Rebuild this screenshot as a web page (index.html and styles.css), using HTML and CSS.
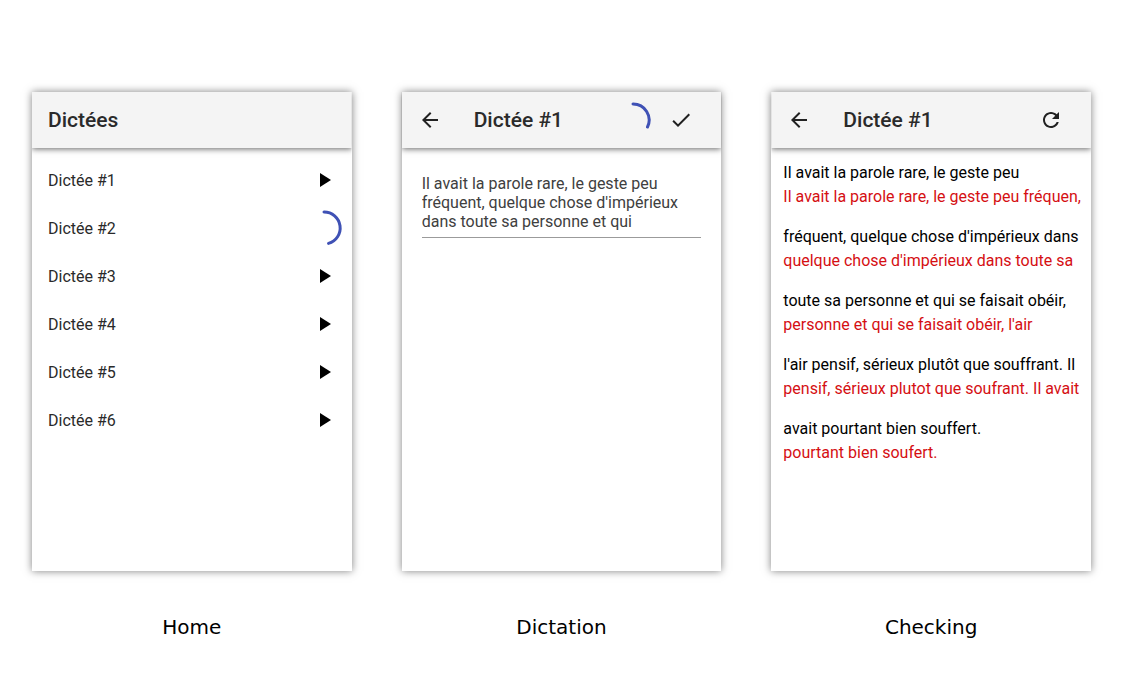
FILE: index.html
```html
<!DOCTYPE html>
<html lang="fr">
<head>
<meta charset="utf-8">
<meta name="viewport" content="width=device-width, initial-scale=1">
<title>Dictées</title>
<link rel="stylesheet" href="styles.css">
</head>
<body>
<main class="board">
  <figure class="screen">
    <section class="phone">
      <header class="bar"><h1 class="title">Dictées</h1></header>
      <ul class="list">
        <li class="row"><span class="label">Dictée #1</span><button class="icon-button" aria-label="Lire Dictée #1"><svg class="icon" viewBox="0 0 24 24"><path d="M8 5v14l11-7z"/></svg></button></li>
        <li class="row"><span class="label">Dictée #2</span><span class="loader"><svg class="spinner" viewBox="0 0 40 40"><path d="M20 4A16 16 0 0 1 24.500 35.400"/></svg></span></li>
        <li class="row"><span class="label">Dictée #3</span><button class="icon-button" aria-label="Lire Dictée #3"><svg class="icon" viewBox="0 0 24 24"><path d="M8 5v14l11-7z"/></svg></button></li>
        <li class="row"><span class="label">Dictée #4</span><button class="icon-button" aria-label="Lire Dictée #4"><svg class="icon" viewBox="0 0 24 24"><path d="M8 5v14l11-7z"/></svg></button></li>
        <li class="row"><span class="label">Dictée #5</span><button class="icon-button" aria-label="Lire Dictée #5"><svg class="icon" viewBox="0 0 24 24"><path d="M8 5v14l11-7z"/></svg></button></li>
        <li class="row"><span class="label">Dictée #6</span><button class="icon-button" aria-label="Lire Dictée #6"><svg class="icon" viewBox="0 0 24 24"><path d="M8 5v14l11-7z"/></svg></button></li>
      </ul>
    </section>
    <figcaption class="caption">Home</figcaption>
  </figure>

  <figure class="screen">
    <section class="phone">
      <header class="bar bar-nav">
        <button class="icon-button" aria-label="Retour"><svg class="icon" viewBox="0 0 24 24"><path d="M20 11H7.830l5.590-5.590L12 4l-8 8 8 8 1.410-1.410L7.830 13H20v-2z"/></svg></button>
        <h2 class="title">Dictée #1</h2>
        <span class="loader"><svg class="spinner" viewBox="0 0 40 40"><path d="M20 4A16 16 0 0 1 34.500 27"/></svg></span>
        <button class="icon-button" aria-label="Valider"><svg class="icon" viewBox="0 0 24 24"><path d="M9 16.170L4.830 12l-1.420 1.410L9 19 21 7l-1.410-1.410z"/></svg></button>
      </header>
      <div class="editor">
        <textarea class="input" rows="3" spellcheck="false" aria-label="Texte de la dictée">Il avait la parole rare, le geste peu fréquent, quelque chose d'impérieux dans toute sa personne et qui</textarea>
      </div>
    </section>
    <figcaption class="caption">Dictation</figcaption>
  </figure>

  <figure class="screen">
    <section class="phone">
      <header class="bar bar-nav">
        <button class="icon-button" aria-label="Retour"><svg class="icon" viewBox="0 0 24 24"><path d="M20 11H7.830l5.590-5.590L12 4l-8 8 8 8 1.410-1.410L7.830 13H20v-2z"/></svg></button>
        <h2 class="title">Dictée #1</h2>
        <button class="icon-button" aria-label="Recommencer"><svg class="icon" viewBox="0 0 24 24"><path d="M17.650 6.350C16.200 4.900 14.210 4 12 4c-4.420 0-7.990 3.580-7.990 8s3.570 8 7.990 8c3.730 0 6.840-2.550 7.730-6h-2.080c-.820 2.330-3.040 4-5.650 4-3.310 0-6-2.690-6-6s2.690-6 6-6c1.660 0 3.140.690 4.220 1.780L13 11h7V4l-2.350 2.350z"/></svg></button>
      </header>
      <div class="result">
        <div class="pair"><p class="line">Il avait la parole rare, le geste peu</p><p class="line wrong">Il avait la parole rare, le geste peu fréquen,</p></div>
        <div class="pair"><p class="line">fréquent, quelque chose d'impérieux dans</p><p class="line wrong">quelque chose d'impérieux dans toute sa</p></div>
        <div class="pair"><p class="line">toute sa personne et qui se faisait obéir,</p><p class="line wrong">personne et qui se faisait obéir, l'air</p></div>
        <div class="pair"><p class="line">l'air pensif, sérieux plutôt que souffrant. Il</p><p class="line wrong">pensif, sérieux plutot que soufrant. Il avait</p></div>
        <div class="pair"><p class="line">avait pourtant bien souffert.</p><p class="line wrong">pourtant bien soufert.</p></div>
      </div>
    </section>
    <figcaption class="caption">Checking</figcaption>
  </figure>
</main>
</body>
</html>
```
FILE: styles.css
```css
* { box-sizing: border-box; }

body {
  margin: 0;
  background: #fff;
  color: #000;
  font: 16px/24px Roboto, sans-serif;
}

.board {
  display: grid;
  grid-template-columns: repeat(auto-fit, minmax(288px, 1fr));
  gap: 50px;
  min-height: 100vh;
  padding: 92px 32px 41px;
}

.screen {
  display: flex;
  flex-direction: column;
  gap: 44px;
  margin: 0;
}

.phone {
  flex: 1;
  background: #fff;
  box-shadow: 0 0 8px rgba(0, 0, 0, .5);
}

.bar {
  display: flex;
  align-items: center;
  height: 56px;
  padding: 0 16px;
  background: #f4f4f4;
  box-shadow: 0 1px 6px rgba(0, 0, 0, .6);
  clip-path: inset(0 0 -12px);
}

.bar-nav { padding: 0 16px 0 4px; }

.title {
  flex: 1;
  margin: 0;
  font-size: 21px;
  font-weight: 500;
  line-height: 24px;
  color: #2a2a2a;
}

.bar-nav .title { padding-left: 20px; }

.icon-button,
.loader {
  display: flex;
  flex: none;
  align-items: center;
  justify-content: center;
  width: 48px;
  height: 48px;
  padding: 0;
  border: 0;
  background: none;
  color: #000;
}

.bar .icon-button { color: #212121; }

.icon {
  width: 24px;
  height: 24px;
  fill: currentColor;
}

.spinner {
  width: 40px;
  height: 40px;
  fill: none;
  stroke: #3f51b5;
  stroke-width: 3;
  stroke-linecap: round;
}

.list {
  margin: 0;
  padding: 8px 0;
  list-style: none;
}

.row {
  display: flex;
  align-items: center;
  justify-content: space-between;
  height: 48px;
  padding: 0 4px 0 16px;
  color: #2a2a2a;
}

.label { padding-top: 2px; }

.editor { padding: 26px 20px; }

.input {
  display: block;
  width: 100%;
  padding: 0 0 6px;
  border: 0;
  border-bottom: 1px solid #9b9b9b;
  outline: 0;
  background: none;
  color: #404040;
  font: inherit;
  line-height: 19px;
  resize: none;
  overflow: hidden;
}

.result {
  display: grid;
  gap: 16px;
  padding: 13px 12px;
}

.line {
  margin: 0;
  white-space: nowrap;
}

.wrong { color: #d50f13; }

.caption {
  font: 20px/24px "DejaVu Sans", sans-serif;
  text-align: center;
}
```
